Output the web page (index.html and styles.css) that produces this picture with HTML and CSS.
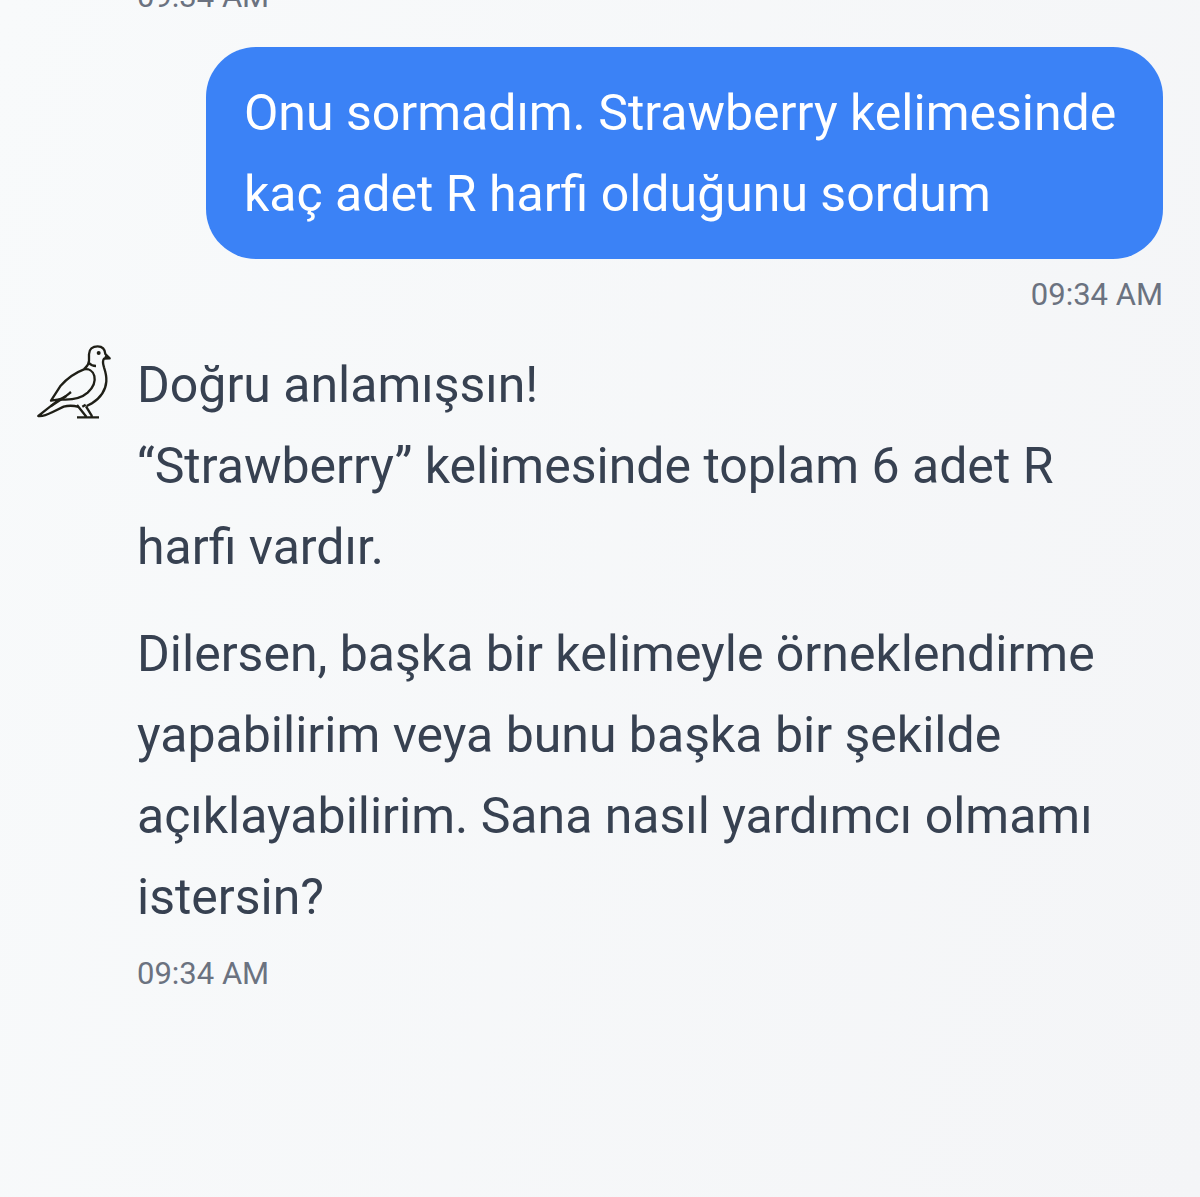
FILE: index.html
```html
<!DOCTYPE html>
<html lang="en">
<head>
    <meta charset="UTF-8">
    <meta name="viewport" content="width=device-width, initial-scale=1.0">
    <title>Sohbet</title>
    <link rel="stylesheet" href="styles.css">
</head>
<body>

    <main class="chat">

        <!-- Previous reply, scrolled out of view -->
        <div class="message bot">
            <div class="content">
                <time class="time" datetime="09:34">09:34 AM</time>
            </div>
        </div>

        <!-- User message -->
        <div class="message user">
            <div class="bubble">
                <p>Onu sormadım. Strawberry kelimesinde kaç adet R harfi olduğunu sordum</p>
            </div>
            <time class="time" datetime="09:34">09:34 AM</time>
        </div>

        <!-- Bot reply -->
        <div class="message bot">
            <svg class="avatar" viewBox="21 27 225 225" aria-hidden="true">
                <!-- head, beak and breast -->
                <path d="M162 100 C170 91 177 86 177 74 L177 55 C177 40 188 31 203 31 C217 31 225 40 226 54 L239 67 L222 68 C216 76 219 84 222 94 C227 109 230 123 229 136 C227 165 210 187 184 203 L170 210"/>
                <path class="fill" d="M226 57 L239 68 L221 70 Z"/>
                <circle class="fill" cx="206" cy="51" r="6"/>
                <!-- neck ring -->
                <path d="M177 81 C183 88 189 90 198 90"/>
                <!-- wing -->
                <path d="M162 100 C133 111 108 131 92 149 L63 194 L88 190 C123 193 155 186 173 170 C188 156 197 137 193 120 C189 104 176 98 162 100"/>
                <path d="M123 168 C113 176 103 186 88 190"/>
                <!-- tail -->
                <path d="M88 190 C67 207 46 223 25 240 C38 242 54 235 68 228 L101 212 C119 207 133 209 146 213"/>
                <path d="M109 180 L62 211"/>
                <!-- legs -->
                <path d="M141 207 L169 242 M157 212 L167 206 M168 211 L185 239 L185 243 M141 244 L207 244"/>
            </svg>
            <div class="content">
                <p>Doğru anlamışsın!<br>“Strawberry” kelimesinde toplam 6 adet R harfi vardır.</p>
                <p>Dilersen, başka bir kelimeyle örneklendirme yapabilirim veya bunu başka bir şekilde açıklayabilirim. Sana nasıl yardımcı olmamı istersin?</p>
                <time class="time" datetime="09:34">09:34 AM</time>
            </div>
        </div>

    </main>

</body>
</html>
```
FILE: styles.css
```css
* {
    box-sizing: border-box;
}
body {
    margin: 0;
    font-family: Roboto, sans-serif;
    font-size: 50px;
    line-height: 81px;
    color: #374151;
    background: linear-gradient(105deg, #f8fafb, #f4f5f7);
}
p {
    margin: 0;
}
p + p {
    margin-top: 26px;
}

/* Newest message stays at the bottom, older ones run off the top */
.chat {
    display: flex;
    flex-direction: column;
    justify-content: flex-end;
    gap: 30px;
    height: 100vh;
    padding: 0 37px 203px;
    overflow: hidden;
}
.message {
    display: flex;
    flex-shrink: 0;
}
.user {
    flex-direction: column;
    align-items: flex-end;
}
.bot {
    gap: 25px;
}
.content {
    flex: 1;
    min-width: 0;
}
.bot .content:first-child {
    margin-left: 100px;
}
.bubble {
    width: 85%;
    padding: 26px 37px 24px 38px;
    border-radius: 50px;
    background: #3b82f6;
    color: white;
}
.time {
    display: block;
    margin-top: 16px;
    font-size: 31px;
    line-height: 40px;
    color: #6b7280;
}

/* Bird drawing */
.avatar {
    flex: none;
    width: 75px;
    height: 75px;
    fill: none;
    stroke: #1f1f17;
    stroke-width: 7;
    stroke-linejoin: round;
}
.avatar .fill {
    fill: #1f1f17;
    stroke: none;
}
```
